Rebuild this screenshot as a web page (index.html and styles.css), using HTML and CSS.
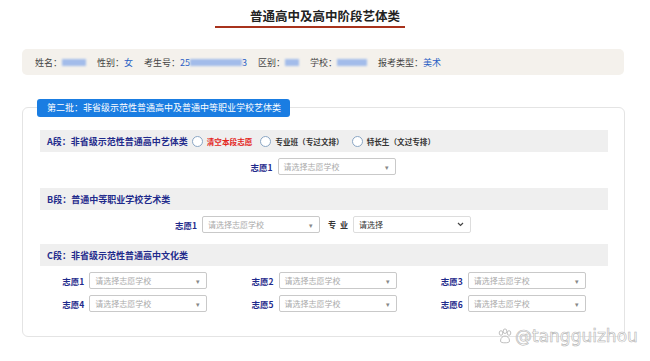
FILE: index.html
```html
<!DOCTYPE html>
<html lang="zh-CN">
<head>
    <meta charset="UTF-8">
    <meta name="viewport" content="width=device-width, initial-scale=1.0">
    <title>普通高中及高中阶段艺体类</title>
    <link rel="stylesheet" href="styles.css">
</head>
<body>
    <div class="page-head">
        <h1>普通高中及高中阶段艺体类</h1>
        <div class="head-line"></div>
    </div>

    <div class="info-bar">
        <span class="info-item">姓名：<span class="blur w26"></span></span>
        <span class="info-item">性别：<span class="val">女</span></span>
        <span class="info-item">考生号：<span class="val">25</span><span class="blur w50"></span><span class="val">3</span></span>
        <span class="info-item">区别：<span class="blur w14"></span></span>
        <span class="info-item">学校：<span class="blur w30"></span></span>
        <span class="info-item">报考类型：<span class="val">美术</span></span>
    </div>

    <div class="card">
        <div class="batch-tab">第二批：非省级示范性普通高中及普通中等职业学校艺体类</div>

        <div class="section-bar">
            <span class="section-title">A段：非省级示范性普通高中艺体类</span>
            <span class="radio"><i class="dot"></i><span class="clear-text">清空本段志愿</span></span>
            <span class="radio"><i class="dot"></i>专业班（专过文排）</span>
            <span class="radio"><i class="dot"></i>特长生（文过专排）</span>
        </div>
        <div class="pick-row">
            <span class="pick-label">志愿1</span>
            <div class="select"><span>请选择志愿学校</span><i class="caret">▾</i></div>
        </div>

        <div class="section-bar">
            <span class="section-title">B段：普通中等职业学校艺术类</span>
        </div>
        <div class="pick-row">
            <span class="pick-label">志愿1</span>
            <div class="select"><span>请选择志愿学校</span><i class="caret">▾</i></div>
            <span class="major-label">专 业</span>
            <div class="select major">
                <span>请选择</span>
                <svg class="chev" width="7" height="5" viewBox="0 0 7 5"><path d="M1 1 L3.5 3.5 L6 1" fill="none" stroke="#444" stroke-width="1.2"/></svg>
            </div>
        </div>

        <div class="section-bar section-c">
            <span class="section-title">C段：非省级示范性普通高中文化类</span>
        </div>
        <div class="pick-grid">
            <div class="pick-cell"><span class="pick-label">志愿1</span><div class="select"><span>请选择志愿学校</span><i class="caret">▾</i></div></div>
            <div class="pick-cell"><span class="pick-label">志愿2</span><div class="select"><span>请选择志愿学校</span><i class="caret">▾</i></div></div>
            <div class="pick-cell"><span class="pick-label">志愿3</span><div class="select"><span>请选择志愿学校</span><i class="caret">▾</i></div></div>
            <div class="pick-cell"><span class="pick-label">志愿4</span><div class="select"><span>请选择志愿学校</span><i class="caret">▾</i></div></div>
            <div class="pick-cell"><span class="pick-label">志愿5</span><div class="select"><span>请选择志愿学校</span><i class="caret">▾</i></div></div>
            <div class="pick-cell"><span class="pick-label">志愿6</span><div class="select"><span>请选择志愿学校</span><i class="caret">▾</i></div></div>
        </div>
    </div>

    <!-- watermark over the bottom right corner -->
    <div class="watermark">
        <svg width="16" height="16" viewBox="0 0 16 16">
            <g fill="none" stroke="#b8b8b8" stroke-width="0.9">
                <ellipse cx="4" cy="5" rx="1.8" ry="2.3"/>
                <ellipse cx="8" cy="3.2" rx="1.8" ry="2.3"/>
                <ellipse cx="12" cy="5" rx="1.8" ry="2.3"/>
                <path d="M3.5 13 C3.5 9.5 6 8 8 8 C10 8 12.5 9.5 12.5 13 C12.5 14.5 10.5 14.8 8 14.8 C5.5 14.8 3.5 14.5 3.5 13 Z"/>
            </g>
        </svg>
        <span>@tangguizhou</span>
    </div>
</body>
</html>
```

FILE: styles.css
```css
body {
    margin: 0;
    font-family: "Noto Sans CJK SC", "Noto Sans", sans-serif;
    color: #333;
    background: #fff;
    position: relative;
    height: 361px;
    overflow: hidden;
}

.page-head {
    padding-top: 6px;
}
.page-head h1 {
    margin: 0;
    font-size: 12.5px;
    line-height: 19px;
    text-align: center;
    color: #222;
}
.head-line {
    width: 190px;
    height: 2px;
    margin: 1px 0 0 215px;
    background: #a8321c;
}

.info-bar {
    display: flex;
    align-items: center;
    gap: 11px;
    margin: 21px 26px 0 22px;
    height: 26px;
    padding-left: 13px;
    background: #f4f1ec;
    border-radius: 5px;
    font-size: 9px;
    color: #444;
}
.info-item {
    display: flex;
    align-items: center;
}
.val {
    color: #2a5fc4;
}
.blur {
    display: inline-block;
    height: 7px;
    background: #8fb0ea;
    filter: blur(1.2px);
    opacity: 0.8;
}
.w26 { width: 24px; }
.w50 { width: 52px; }
.w14 { width: 14px; }
.w30 { width: 30px; }

.card {
    margin: 32px 25px 0 22px;
    height: 228px;
    border: 1px solid #e4e4e4;
    border-radius: 6px;
    padding: 0 16px 0 17px;
}
.batch-tab {
    width: max-content;
    margin: -9px 0 0 -3px;
    height: 18px;
    line-height: 18px;
    padding: 0 9px 0 10px;
    background: #1a7de2;
    color: #fff;
    font-size: 9px;
    border-radius: 3px;
}

.section-bar {
    display: flex;
    align-items: center;
    height: 22px;
    margin-top: 13px;
    padding-left: 7px;
    background: #efefef;
    font-size: 7.6px;
    font-weight: bold;
    color: #333;
}
.section-c {
    margin-top: 11px;
}
.section-title {
    font-size: 9px;
    color: #1f2b8c;
    margin-right: 4px;
}
.radio {
    display: flex;
    align-items: center;
    margin-right: 8px;
}
.dot {
    width: 11px;
    height: 11px;
    border: 1px solid #8aa6c4;
    border-radius: 50%;
    background: #fff;
    margin-right: 4px;
    box-sizing: border-box;
}
.clear-text {
    color: #e3241b;
}

.pick-row {
    display: flex;
    justify-content: center;
    align-items: center;
    margin-top: 6px;
    padding-right: 2px;
}
.pick-label {
    font-size: 8.5px;
    font-weight: bold;
    color: #1f2b8c;
    margin-right: 5px;
}
.select {
    display: flex;
    align-items: center;
    justify-content: space-between;
    width: 118px;
    height: 17px;
    box-sizing: border-box;
    border: 1px solid #c9c9c9;
    border-radius: 2px;
    padding: 0 6px 0 5px;
    font-size: 8px;
    color: #aaa;
    background: #fff;
}
.caret {
    font-style: normal;
    font-size: 7px;
    color: #888;
}
.major-label {
    font-size: 8px;
    font-weight: bold;
    color: #333;
    margin: 0 4px 0 8px;
    letter-spacing: 1px;
}
.select.major {
    color: #333;
    border-color: #ddd;
}

.pick-grid {
    display: grid;
    grid-template-columns: repeat(3, 1fr);
    row-gap: 6px;
    margin-top: 6px;
}
.pick-cell {
    display: flex;
    justify-content: center;
    align-items: center;
}

.watermark {
    position: absolute;
    left: 497px;
    top: 326px;
    display: flex;
    align-items: center;
    gap: 2px;
    font-family: "DejaVu Sans", sans-serif;
    font-size: 17px;
    color: rgba(255, 255, 255, 0.85);
    -webkit-text-stroke: 0.6px #b5b5b5;
}
```
